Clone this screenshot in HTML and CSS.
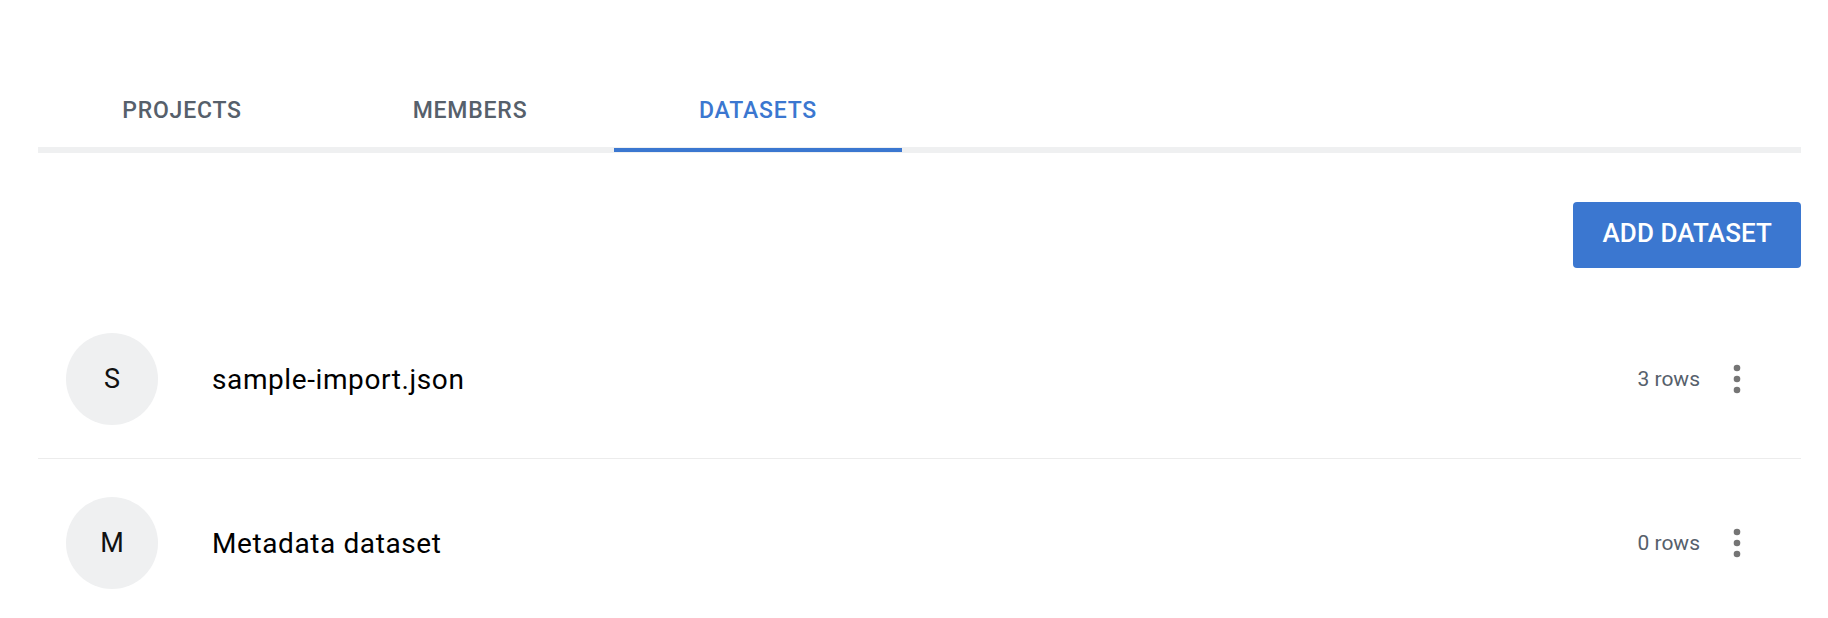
FILE: index.html
```html
<!DOCTYPE html>
<html lang="en">
<head>
  <meta charset="UTF-8" />
  <title>Datasets</title>
  <link rel="stylesheet" href="styles.css">
</head>
<body>
  <div class="page">
    <nav class="tabs">
      <div class="tab">Projects</div>
      <div class="tab">Members</div>
      <div class="tab active">Datasets</div>
    </nav>
    <div class="track"></div>

    <div class="toolbar">
      <button class="add-btn">Add dataset</button>
    </div>

    <ul class="list">
      <li class="row">
        <div class="avatar">S</div>
        <div class="name">sample-import.json</div>
        <div class="meta">3 rows</div>
        <div class="more">
          <svg width="8" height="30" viewBox="0 0 8 30">
            <circle cx="4" cy="4" r="3.3" />
            <circle cx="4" cy="15" r="3.3" />
            <circle cx="4" cy="26" r="3.3" />
          </svg>
        </div>
      </li>
      <li class="row">
        <div class="avatar">M</div>
        <div class="name">Metadata dataset</div>
        <div class="meta">0 rows</div>
        <div class="more">
          <svg width="8" height="30" viewBox="0 0 8 30">
            <circle cx="4" cy="4" r="3.3" />
            <circle cx="4" cy="15" r="3.3" />
            <circle cx="4" cy="26" r="3.3" />
          </svg>
        </div>
      </li>
    </ul>
  </div>
</body>
</html>
```

FILE: styles.css
```css
body {
  margin: 0;
  background: #fff;
  font-family: Roboto, 'Liberation Sans', sans-serif;
  color: #111;
}
.page {
  padding: 70px 27px 0 38px;
}
.tabs {
  display: flex;
}
.tab {
  position: relative;
  width: 288px;
  padding: 27px 0 23px;
  line-height: 27px;
  font-size: 23px;
  font-weight: 500;
  letter-spacing: 0.8px;
  text-transform: uppercase;
  text-align: center;
  color: #56606b;
}
.tab.active {
  color: #3b77d0;
}
.tab.active::after {
  content: '';
  position: absolute;
  left: 0;
  right: 0;
  bottom: -5px;
  height: 4px;
  background: #3b77d0;
}
.track {
  height: 6px;
  background: #eff0f1;
}
.toolbar {
  display: flex;
  justify-content: flex-end;
  padding-top: 49px;
}
.add-btn {
  height: 66px;
  padding: 16px 29px 20px;
  border: none;
  border-radius: 4px;
  background: #3b77d0;
  color: #fff;
  font-family: Roboto, 'Liberation Sans', sans-serif;
  font-size: 26px;
  font-weight: 500;
  line-height: 30px;
  letter-spacing: 0.1px;
  text-transform: uppercase;
}
.list {
  list-style: none;
  margin: 27px 0 0;
  padding: 0;
}
.row {
  box-sizing: border-box;
  height: 164px;
  padding: 5px 0 0 28px;
  display: flex;
  align-items: center;
  border-bottom: 1px solid #ececec;
}
.avatar {
  width: 92px;
  height: 92px;
  border-radius: 50%;
  background: #eff0f1;
  display: flex;
  align-items: center;
  justify-content: center;
  font-size: 27px;
  color: #111;
  flex-shrink: 0;
}
.name {
  flex: 1;
  margin-left: 54px;
  font-size: 28px;
  letter-spacing: 0.6px;
  color: #000;
}
.meta {
  font-size: 21px;
  color: #56606b;
}
.more {
  width: 40px;
  height: 40px;
  margin: 0 44px 0 17px;
  display: flex;
  align-items: center;
  justify-content: center;
}
.more svg {
  fill: #757575;
}
```
